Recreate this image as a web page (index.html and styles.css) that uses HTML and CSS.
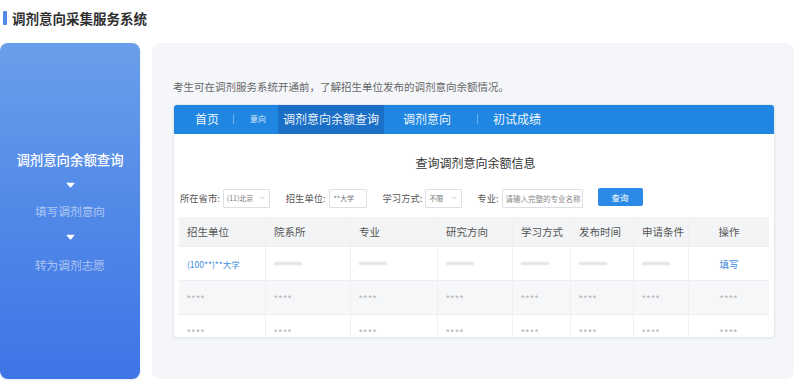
FILE: index.html
```html
<!DOCTYPE html>
<html lang="zh-CN">
<head>
<meta charset="utf-8">
<title>调剂意向采集服务系统</title>
<link rel="stylesheet" href="styles.css">
</head>
<body>
<div class="header">
  <span class="hbar"></span>
  <h1 class="htitle">调剂意向采集服务系统</h1>
</div>
<div class="main">
  <div class="steps">
    <div class="step step-active">调剂意向余额查询</div>
    <svg class="arrow arrow1" width="9" height="6" viewBox="0 0 9 6"><path d="M1 0.8 H8 Q8.8 0.8 8.3 1.5 L5.1 5.2 Q4.5 5.8 3.9 5.2 L0.7 1.5 Q0.2 0.8 1 0.8 Z" fill="#fff"/></svg>
    <div class="step step2">填写调剂意向</div>
    <svg class="arrow arrow2" width="9" height="6" viewBox="0 0 9 6"><path d="M1 0.8 H8 Q8.8 0.8 8.3 1.5 L5.1 5.2 Q4.5 5.8 3.9 5.2 L0.7 1.5 Q0.2 0.8 1 0.8 Z" fill="#fff"/></svg>
    <div class="step step3">转为调剂志愿</div>
  </div>
  <div class="content">
    <p class="desc">考生可在调剂服务系统开通前，了解招生单位发布的调剂意向余额情况。</p>
    <div class="card">
      <div class="nav">
        <span class="nav-item nav-home">首页</span>
        <span class="nav-sep sep1"></span>
        <span class="nav-small">意向</span>
        <span class="nav-item nav-active">调剂意向余额查询</span>
        <span class="nav-item nav-yx">调剂意向</span>
        <span class="nav-sep sep2"></span>
        <span class="nav-item nav-cs">初试成绩</span>
      </div>
      <div class="card-body">
        <div class="card-title">查询调剂意向余额信息</div>
        <div class="search">
          <span class="label">所在省市:</span>
          <span class="field sel sel-prov">(11)北京<svg class="chev" width="6" height="4" viewBox="0 0 6 4"><path d="M0.5 0.5 L3 3 L5.5 0.5" fill="none" stroke="#c4c4c4" stroke-width="0.8"/></svg></span>
          <span class="label l-unit">招生单位:</span>
          <span class="field inp inp-unit">**大学</span>
          <span class="label l-mode">学习方式:</span>
          <span class="field sel sel-mode">不限<svg class="chev" width="6" height="4" viewBox="0 0 6 4"><path d="M0.5 0.5 L3 3 L5.5 0.5" fill="none" stroke="#c4c4c4" stroke-width="0.8"/></svg></span>
          <span class="label l-major">专业:</span>
          <span class="field inp inp-major ph">请输入完整的专业名称</span>
          <span class="btn">查询</span>
        </div>
        <div class="table">
          <div class="trow thead">
            <div class="cell">招生单位</div>
            <div class="cell">院系所</div>
            <div class="cell">专业</div>
            <div class="cell">研究方向</div>
            <div class="cell">学习方式</div>
            <div class="cell">发布时间</div>
            <div class="cell">申请条件</div>
            <div class="cell center">操作</div>
          </div>
          <div class="trow r1">
            <div class="cell link">(100**)**大学</div>
            <div class="cell"><span class="blur"></span></div>
            <div class="cell"><span class="blur"></span></div>
            <div class="cell"><span class="blur"></span></div>
            <div class="cell"><span class="blur"></span></div>
            <div class="cell"><span class="blur"></span></div>
            <div class="cell"><span class="blur"></span></div>
            <div class="cell center link link-op">填写</div>
          </div>
          <div class="trow r2">
            <div class="cell star">****</div>
            <div class="cell star">****</div>
            <div class="cell star">****</div>
            <div class="cell star">****</div>
            <div class="cell star">****</div>
            <div class="cell star">****</div>
            <div class="cell star">****</div>
            <div class="cell star center">****</div>
          </div>
          <div class="trow r3">
            <div class="cell star">****</div>
            <div class="cell star">****</div>
            <div class="cell star">****</div>
            <div class="cell star">****</div>
            <div class="cell star">****</div>
            <div class="cell star">****</div>
            <div class="cell star">****</div>
            <div class="cell star center">****</div>
          </div>
        </div>
      </div>
    </div>
  </div>
</div>
</body>
</html>
```
FILE: styles.css
```css
* { box-sizing: border-box; }
html, body { margin: 0; padding: 0; background: #ffffff; }
body {
  width: 800px;
  height: 382px;
  overflow: hidden;
  font-family: "Noto Sans CJK SC", "Noto Sans", sans-serif;
  color: #333;
}
.header {
  height: 43px;
  display: flex;
  align-items: flex-start;
  padding: 11px 0 0 3px;
}
.hbar {
  width: 4px;
  height: 14px;
  background: #4f8ae3;
  border-radius: 1px;
}
.htitle {
  margin: 0 0 0 5px;
  font-size: 13.5px;
  line-height: 14px;
  font-weight: 700;
  color: #2f2f2f;
}
.main {
  display: flex;
  gap: 12px;
  padding: 0 6px 0 0;
  height: 336px;
}
.steps {
  width: 140px;
  height: 336px;
  border-radius: 8px;
  background: linear-gradient(180deg, #6b9fea 0%, #5189e8 50%, #3f74e6 100%);
  display: flex;
  flex-direction: column;
  align-items: center;
  padding-top: 108px;
  box-shadow: 0 1px 3px rgba(60, 100, 200, 0.15);
}
.step {
  line-height: 16px;
  color: rgba(255, 255, 255, 0.55);
  font-size: 11.7px;
}
.step-active {
  color: #fff;
  font-size: 13.4px;
  font-weight: 500;
}
.arrow { display: block; }
.arrow1 { margin-top: 15px; }
.step2 { margin-top: 15px; }
.arrow2 { margin-top: 15px; }
.step3 { margin-top: 17px; }

.content {
  flex: 1;
  height: 336px;
  border-radius: 8px;
  background: #f4f6fa;
  padding: 37px 19px 0 21px;
}
.desc {
  margin: 0;
  font-size: 10.5px;
  line-height: 14px;
  color: #666;
}
.card {
  margin-top: 10px;
  height: 234px;
  background: #fff;
  border: 1px solid #e3e7ee;
  border-radius: 4px;
  overflow: hidden;
  box-shadow: 0 1px 3px rgba(0, 0, 0, 0.06);
}
.nav {
  height: 30px;
  margin: -1px -1px 0 -1px;
  background: #1f87e2;
  display: flex;
  align-items: center;
  color: #fff;
}
.nav-item {
  font-size: 12px;
  line-height: 30px;
  color: rgba(255, 255, 255, 0.95);
}
.nav-home { margin-left: 22px; }
.nav-sep {
  width: 1px;
  height: 10px;
  background: rgba(255, 255, 255, 0.35);
}
.sep1 { margin-left: 14px; }
.nav-small {
  margin-left: 16px;
  font-size: 8px;
  line-height: 30px;
  color: rgba(255, 255, 255, 0.85);
}
.nav-active {
  margin-left: 12px;
  width: 106px;
  text-align: center;
  background: #1b6fc6;
}
.nav-yx { margin-left: 19px; }
.sep2 { margin-left: 26px; }
.nav-cs { margin-left: 15px; }

.card-body { padding: 0 5px 0 6px; }
.card-title {
  margin-top: 21px;
  text-align: center;
  font-size: 12px;
  line-height: 16px;
  color: #333;
  padding-left: 2px;
}
.search {
  margin-top: 17px;
  height: 20px;
  display: flex;
  align-items: center;
}
.label {
  font-size: 9.3px;
  color: #555;
  line-height: 20px;
}
.field {
  height: 19px;
  border: 1px solid #dcdfe4;
  background: #fff;
  border-radius: 1px;
  font-size: 7px;
  color: #777;
  display: flex;
  align-items: center;
  padding-left: 3px;
}
.sel { justify-content: space-between; padding-right: 4px; }
.chev { display: block; }
.sel-prov { width: 47px; margin-left: 3px; }
.l-unit { margin-left: 16px; }
.inp-unit { width: 38px; margin-left: 3px; padding-left: 4px; }
.l-mode { margin-left: 16px; }
.sel-mode { width: 37px; margin-left: 3px; }
.l-major { margin-left: 15px; }
.inp-major { width: 81px; margin-left: 3px; }
.ph { color: #888; font-size: 7.5px; }
.btn {
  margin-left: 15px;
  width: 45px;
  height: 18px;
  margin-top: -3px;
  background: #2a8ae6;
  border-radius: 2px;
  color: #fff;
  font-size: 8.5px;
  display: flex;
  align-items: center;
  justify-content: center;
}
.table {
  margin-top: 9px;
  margin-left: -1px;
  width: 590px;
}
.trow {
  display: grid;
  grid-template-columns: 86px 85px 87px 75px 58px 63px 55px 81px;
  height: 34px;
  border-bottom: 1px solid #eceef1;
}
.thead {
  height: 30px;
  background: #f2f4f6;
  border-bottom: 1px solid #eceef1;
}
.cell {
  display: flex;
  align-items: center;
  padding-left: 8px;
  font-size: 10.5px;
  color: #555;
  border-left: 1px solid #eff0f2;
}
.cell:first-child { border-left: none; }
.center { justify-content: center; padding-left: 0; }
.r2 { background: #f6f7f9; height: 34px; }
.link { color: #3c8be0; font-size: 8.5px; }
.link-op { font-size: 9.5px; }
.blur {
  display: block;
  width: 28px;
  height: 3px;
  border-radius: 2px;
  background: #e6e7ea;
  box-shadow: 0 0 2px #e6e7ea;
}
.star {
  font-family: "Liberation Sans", sans-serif;
  font-size: 9px;
  letter-spacing: 1.1px;
  color: #b0b0b0;
}
```
